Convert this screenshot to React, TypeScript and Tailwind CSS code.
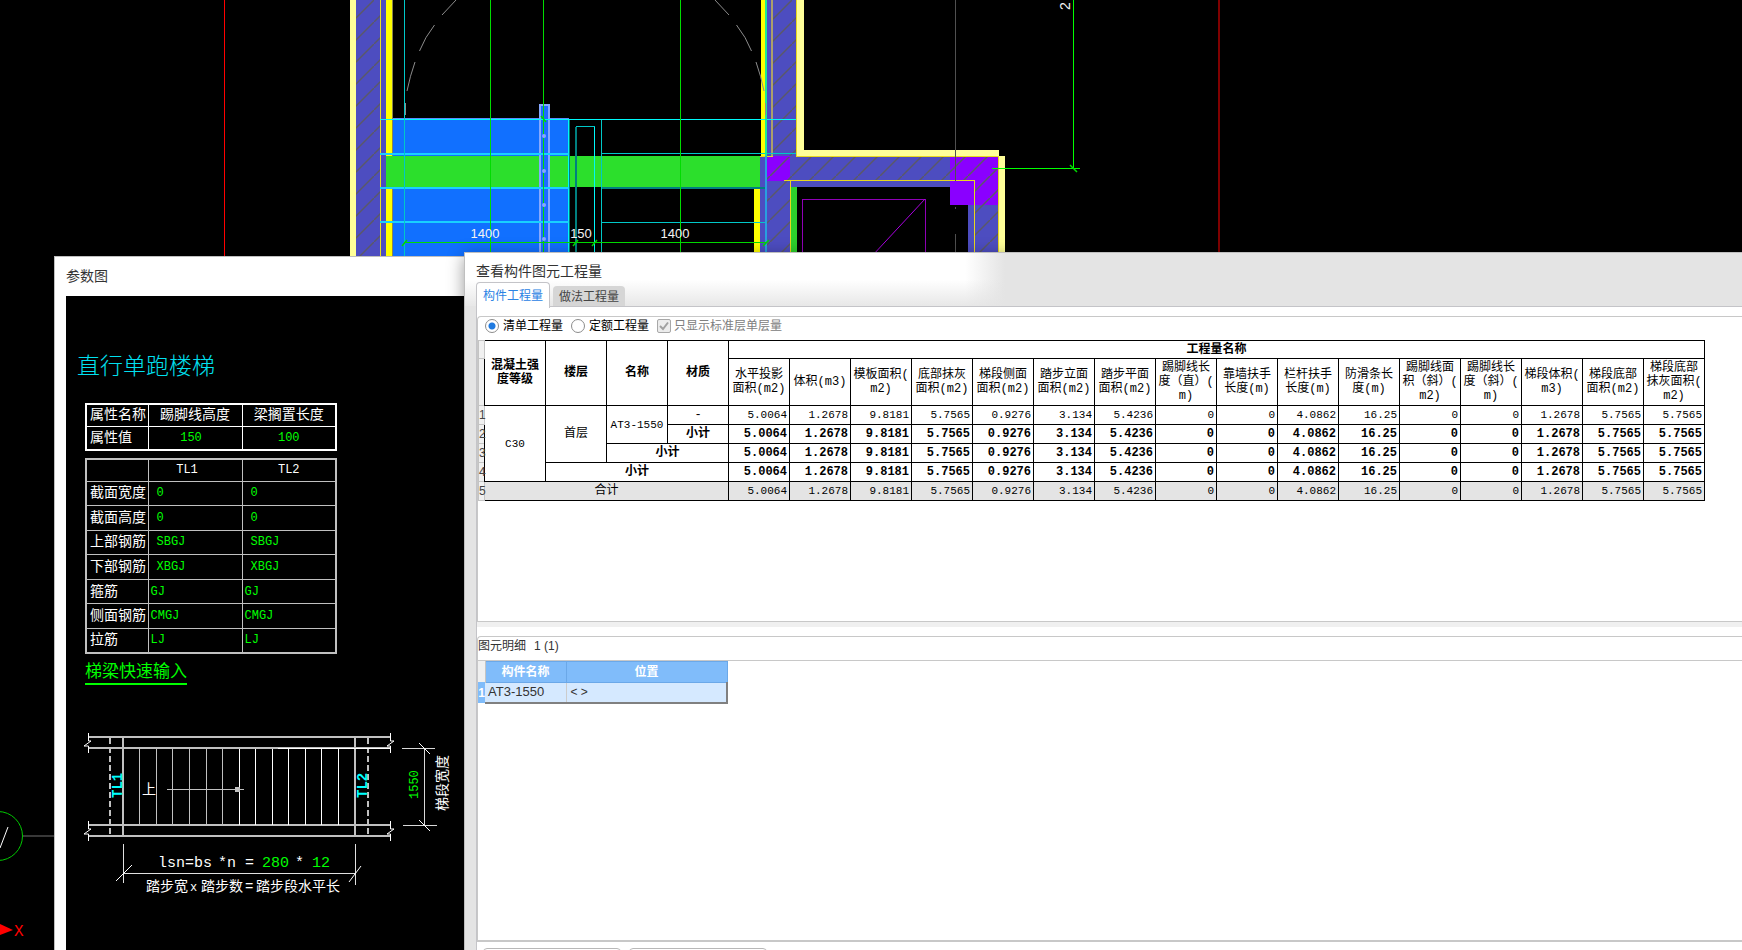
import React from "react";

const uiFont = "font-['Liberation_Sans','Noto_Sans_CJK_SC',sans-serif]";
const cadFont = "font-['Liberation_Mono','Noto_Sans_CJK_SC',monospace]";

function CadBackground() {
  const wall = "#4d4dc0";
  const pale = "#ffff99";
  return (
    <svg className="absolute left-0 top-0" width="1742" height="950" viewBox="0 0 1742 950" aria-hidden="true">
      <defs>
        <pattern id="hatch" width="22" height="22" patternUnits="userSpaceOnUse">
          <path d="M-1 23L23 -1" stroke="#5a5868" strokeWidth="1.5" shapeRendering="auto" />
        </pattern>
      </defs>
      <g shapeRendering="crispEdges">
        <rect x="224" y="0" width="1" height="260" fill="#f00" />
        <rect x="1218" y="0" width="2" height="260" fill="#800000" />
        <rect x="350" y="0" width="6" height="260" fill={pale} />
        <rect x="356" y="0" width="30" height="260" fill={wall} />
        <rect x="356" y="0" width="24" height="260" fill="url(#hatch)" />
        <rect x="380" y="0" width="1" height="260" fill="#e8e020" />
        <rect x="386" y="0" width="6" height="260" fill="#ff0" />
        <rect x="392" y="0" width="1" height="260" fill="#8a8450" />

        <rect x="393" y="119" width="176" height="140" fill="#1170ff" />
        <rect x="393" y="118" width="176" height="1" fill="#5a8cff" />
        <rect x="386" y="156" width="374" height="31" fill="#2cdf2c" />

        <rect x="761" y="0" width="5" height="156" fill="#ff0" />
        <rect x="767" y="0" width="29" height="157" fill={wall} />
        <rect x="773" y="0" width="23" height="157" fill="url(#hatch)" />
        <rect x="771" y="0" width="2" height="156" fill="#aca06c" />
        <rect x="797" y="0" width="7" height="156" fill={pale} />
        <rect x="797" y="150" width="202" height="6" fill={pale} />
        <rect x="760" y="156" width="31" height="100" fill={wall} />
        <rect x="790" y="157" width="160" height="30" fill={wall} />
        <rect x="968" y="205" width="31" height="50" fill={wall} />
        <rect x="767" y="156" width="23" height="25" fill="#8a00ff" />
        <rect x="950" y="157" width="49" height="48" fill="#8a00ff" />
        <rect x="767" y="157" width="232" height="24" fill="url(#hatch)" />
        <rect x="767" y="181" width="23" height="75" fill="url(#hatch)" />
        <rect x="975" y="181" width="24" height="75" fill="url(#hatch)" />
        <rect x="999" y="156" width="6" height="100" fill={pale} />
        <rect x="754" y="187" width="6" height="70" fill="#ff0" />
        <rect x="791" y="187" width="6" height="70" fill="#2cd02c" />
        <g fill="#e8d820">
          <rect x="796" y="0" width="1" height="157" />
          <rect x="796" y="156" width="203" height="1" />
          <rect x="760" y="156" width="13" height="1" />
          <rect x="784" y="180" width="191" height="1" />
          <rect x="790" y="181" width="1" height="75" />
          <rect x="974" y="181" width="1" height="75" />
          <rect x="998" y="157" width="1" height="99" />
        </g>
        <rect x="955" y="0" width="1" height="181" fill="#505050" />
        <rect x="955" y="207" width="1" height="2" fill="#505050" />
        <rect x="955" y="234" width="1" height="20" fill="#505050" />

        <rect x="539" y="104" width="11" height="150" fill="#1c6cff" />
        <path d="M540 256V105H549V256" fill="none" stroke="#86a8ff" strokeWidth="2" />

        <g fill="#00f8f8">
          <rect x="380" y="119" width="416" height="1" />
          <rect x="594" y="127" width="1" height="130" />
          <rect x="568" y="119" width="1" height="137" />
        </g>
        <g fill="#18d0ff">
          <rect x="380" y="153" width="189" height="2" />
          <rect x="380" y="187" width="189" height="2" />
          <rect x="380" y="221" width="189" height="2" />
        </g>
        <g fill="#00c8c8">
          <rect x="404" y="0" width="1" height="257" />
          <rect x="602" y="153" width="194" height="1" />
          <rect x="602" y="222" width="164" height="1" />
          <rect x="601" y="120" width="1" height="136" />
          <rect x="576" y="126" width="19" height="1" />
        </g>
        <g fill="#008080">
          <rect x="602" y="187" width="164" height="2" />
          <rect x="575" y="127" width="2" height="130" />
          <rect x="569" y="120" width="1" height="136" />
        </g>
        <rect x="765" y="0" width="2" height="156" fill="#20e890" />
        <rect x="765" y="156" width="2" height="100" fill="#28a0e0" />

        <g fill="#00dc00">
          <rect x="490" y="0" width="1" height="257" />
          <rect x="543" y="0" width="1" height="257" />
          <rect x="680" y="0" width="1" height="257" />
          <rect x="404" y="242" width="362" height="1" />
        </g>
        <g fill="#0f0">
          <rect x="1073" y="0" width="1" height="169" />
          <rect x="992" y="168" width="88" height="1" />
        </g>
        <path d="M802.500 256V199H925.500V256" fill="none" stroke="#9000b8" />
      </g>
      <path d="M925 199L872 256" stroke="#a800e0" fill="none" />
      <path
        d="M402 246l5-6M573 246l5-6M592 246l5-6M763 246l6-6M541 116l5 6M1070 165l7 7"
        stroke="#00d800"
        strokeWidth="1.500"
        fill="none"
      />
      <g fill="#86a8ff">
        <circle cx="544" cy="136" r="2" />
        <circle cx="544" cy="171" r="2" />
        <circle cx="544" cy="205" r="2" />
        <circle cx="544" cy="239" r="2" />
      </g>
      <g stroke="#8c8c8c" fill="none">
        <path d="M405.500 115V103M407 91Q410 76 415 62M419.500 51Q425 37 434.500 25M442 15L456 0" />
        <path d="M765.500 115V103M764 91Q761 76 756 62M751.500 51Q746 37 736.500 25M729 15L715 0" />
      </g>
      <g fill="#f4f4f4" fontSize="13" textAnchor="middle" fontFamily="'Liberation Sans Narrow','Liberation Sans',sans-serif">
        <text x="485" y="238">1400</text>
        <text x="581" y="238">150</text>
        <text x="675" y="238">1400</text>
        <text transform="translate(1070 10) rotate(-90)" textAnchor="start" fontSize="14">2</text>
      </g>
      <circle cx="-2" cy="836" r="24.500" fill="none" stroke="#00c800" />
      <path d="M8 827L0 848" stroke="#fff" />
      <path d="M23 836H54" stroke="#383838" strokeWidth="2" />
      <path d="M0 924L13 930L0 935Z" fill="#f00" />
      <text x="14" y="936" fill="#f00" fontSize="16" fontFamily="'Liberation Mono',monospace">X</text>
    </svg>
  );
}

const beamRows = [
  ["截面宽度", "0", "0", "pl-2"],
  ["截面高度", "0", "0", "pl-2"],
  ["上部钢筋", "SBGJ", "SBGJ", "pl-2"],
  ["下部钢筋", "XBGJ", "XBGJ", "pl-2"],
  ["箍筋", "GJ", "GJ", "pl-0.5"],
  ["侧面钢筋", "CMGJ", "CMGJ", "pl-0.5"],
  ["拉筋", "LJ", "LJ", "pl-0.5"],
];

function StairPlan() {
  const treads = [139, 156, 172, 189, 206, 222, 239, 255, 272, 288, 305, 321, 338];
  return (
    <svg className="mt-[34px] block" width="398" height="190" viewBox="66 720 398 190" fill="none">
      <g stroke="#c0c0c0" strokeWidth="2" shapeRendering="crispEdges">
        <path d="M88 738H391M88 749H391M88 826H391M88 837H391" />
        <path d="M123 738V837M355 738V837" />
        <path d="M110 739V837M368 739V837" strokeDasharray="6 3" />
      </g>
      <g shapeRendering="crispEdges">
        {treads.map((x, i) => (
          <path key={x} d={`M${x + 0.5} 750V826`} stroke={i < 6 ? "#c0c0c0" : "#fff"} />
        ))}
        <path d="M278 749.500H390" stroke="#fff" />
        <path d="M402 749.500H435M403 826.500H437M424.500 749V826" stroke="#d8d8d8" />
        <path d="M167 790.500H244" stroke="#c0c0c0" />
        <path d="M123.500 845V884M355.500 845V886M123 874.500H356" stroke="#e0e0e0" />
        <rect x="235" y="788" width="5" height="5" fill="#c0c0c0" />
      </g>
      <g stroke="#fff">
        <path d="M88.500 734V742L91 742L84 747H88.500V754M88.500 822V830L91 830L84 835H88.500V842" />
        <path d="M390.500 734V742L394 742L387 747H390.500V754M390.500 822V830L394 830L387 835H390.500V842" />
        <path d="M419 744L430 755M419 821L430 832M116 882L132 866M349 883L361 867" />
      </g>
      <g fontFamily="'Liberation Mono','Noto Sans CJK SC',monospace" fontSize="14">
        <g fill="#0ff" fontWeight="700">
          <text transform="translate(122 799) rotate(-90)">TL1</text>
          <text transform="translate(367 799) rotate(-90)">TL2</text>
        </g>
        <text x="142" y="795" fill="#fff">上</text>
        <text transform="translate(418 800) rotate(-90)" fill="#0f0" fontSize="12">1550</text>
        <text transform="translate(447 812) rotate(-90)" fill="#fff">梯段宽度</text>
        <g fill="#fff" fontSize="15">
          <text x="158" y="868">lsn=bs</text>
          <text x="218" y="868">*n</text>
          <text x="245" y="868">=</text>
          <text x="262" y="868" fill="#0f0">280</text>
          <text x="295" y="868">*</text>
          <text x="312" y="868" fill="#0f0">12</text>
        </g>
        <g fill="#fff">
          <text x="146" y="892">踏步宽</text>
          <text x="190" y="892" fontSize="12">x</text>
          <text x="201" y="892">踏步数</text>
          <text x="245" y="892">=</text>
          <text x="256" y="892">踏步段水平长</text>
        </g>
      </g>
    </svg>
  );
}

function ParameterWindow() {
  return (
    <section className={`absolute bottom-0 left-[54px] top-[256px] flex w-[420px] flex-col border-l border-t border-[#bfbfbf] bg-white pl-[11px] ${uiFont}`}>
      <h2 className="flex h-[39px] shrink-0 items-center text-[14px] text-[#333]">参数图</h2>
      <div className={`flex-1 overflow-hidden bg-black text-[14px] leading-[20px] text-white ${cadFont}`}>
        <h3 className="mt-[56px] pl-[11px] text-[23px] leading-[32px] font-light text-[#00e0f0]">直行单跑楼梯</h3>
        <div className="pl-[19px]">
          <table className="mt-[19px] w-[252px] table-fixed border-collapse border-2 border-white">
            <colgroup>
              <col className="w-[62px]" />
              <col />
              <col />
            </colgroup>
            <tbody>
              <tr className="h-[22px]">
                <th className="border border-white p-0 pl-[3px] text-left font-normal whitespace-nowrap">属性名称</th>
                <th className="border border-white p-0 font-normal">踢脚线高度</th>
                <th className="border border-white p-0 font-normal">梁搁置长度</th>
              </tr>
              <tr className="h-[24px]">
                <th className="border border-white p-0 pl-[3px] text-left font-normal">属性值</th>
                <td className="border border-white p-0 pr-2 text-center text-[12px] text-[#0f0]">150</td>
                <td className="border border-white p-0 text-center text-[12px] text-[#0f0]">100</td>
              </tr>
            </tbody>
          </table>
          <table className="mt-[7px] h-[196px] w-[252px] table-fixed border-collapse border-2 border-[#c0c0c0]">
            <colgroup>
              <col className="w-[62px]" />
              <col />
              <col />
            </colgroup>
            <thead>
              <tr className="h-[22px] text-[12px]">
                <td className="border border-[#c0c0c0] p-0" />
                <th className="border border-[#c0c0c0] p-0 pr-4 font-normal">TL1</th>
                <th className="border border-[#c0c0c0] p-0 font-normal">TL2</th>
              </tr>
            </thead>
            <tbody>
              {beamRows.map(([name, a, b, pad]) => (
                <tr key={name} className="h-[24px]">
                  <th className="border border-[#c0c0c0] p-0 pl-[3px] text-left font-normal whitespace-nowrap">{name}</th>
                  <td className={`border border-[#c0c0c0] text-[12px] text-[#0f0] ${pad}`}>{a}</td>
                  <td className={`border border-[#c0c0c0] text-[12px] text-[#0f0] ${pad}`}>{b}</td>
                </tr>
              ))}
            </tbody>
          </table>
          <a href="#quick-input" className="mt-[9px] inline-block border-b-2 border-[#0f0] text-[17px] leading-[20px] text-[#0f0]">
            梯梁快速输入
          </a>
        </div>
        <StairPlan />
      </div>
    </section>
  );
}

const columns = [
  ["水平投影", "面积(m2)"],
  ["体积(m3)"],
  ["模板面积(", "m2)"],
  ["底部抹灰", "面积(m2)"],
  ["梯段侧面", "面积(m2)"],
  ["踏步立面", "面积(m2)"],
  ["踏步平面", "面积(m2)"],
  ["踢脚线长", "度（直）(", "m)"],
  ["靠墙扶手", "长度(m)"],
  ["栏杆扶手", "长度(m)"],
  ["防滑条长", "度(m)"],
  ["踢脚线面", "积（斜）(", "m2)"],
  ["踢脚线长", "度（斜）(", "m)"],
  ["梯段体积(", "m3)"],
  ["梯段底部", "面积(m2)"],
  ["梯段底部", "抹灰面积(", "m2)"],
];

const values = [
  "5.0064", "1.2678", "9.8181", "5.7565", "0.9276", "3.134", "5.4236", "0",
  "0", "4.0862", "16.25", "0", "0", "1.2678", "5.7565", "5.7565",
];

const cell = "border border-black p-0 overflow-hidden whitespace-nowrap";

function RowHead({ children }: { children?: React.ReactNode }) {
  return (
    <th className={`border border-[#c4c4c4] bg-[#f0f0f0] p-0 text-left text-[12px] font-normal text-[#444] ${uiFont}`}>
      {children}
    </th>
  );
}

function Values({ bold = false }: { bold?: boolean }) {
  return (
    <>
      {values.map((v, i) => (
        <td key={i} className={`${cell} pr-0.5 text-right ${bold ? "text-[12px] font-bold" : "text-[11px]"}`}>
          {v}
        </td>
      ))}
    </>
  );
}

function QuantityTable() {
  return (
    <table className={`w-[1226px] table-fixed border-collapse bg-white text-[12px] leading-[14px] text-black ${cadFont}`}>
      <colgroup>
        <col className="w-[6px]" />
        {Array.from({ length: 20 }, (_, i) => (
          <col key={i} className="w-[61px]" />
        ))}
      </colgroup>
      <thead>
        <tr className="h-[18px]">
          <RowHead />
          <th className={cell} rowSpan={2}>混凝土强<br />度等级</th>
          <th className={cell} rowSpan={2}>楼层</th>
          <th className={cell} rowSpan={2}>名称</th>
          <th className={cell} rowSpan={2}>材质</th>
          <th className={cell} colSpan={16}>工程量名称</th>
        </tr>
        <tr className="h-[47px]">
          <RowHead />
          {columns.map((lines, i) => (
            <th key={i} className={`${cell} font-normal`}>
              {lines.map((l) => (
                <span key={l} className="-mx-1 block">{l}</span>
              ))}
            </th>
          ))}
        </tr>
      </thead>
      <tbody className="text-center">
        <tr className="h-[19px]">
          <RowHead>1</RowHead>
          <td className={`${cell} text-[11px]`} rowSpan={4}>C30</td>
          <td className={cell} rowSpan={3}>首层</td>
          <td className={`${cell} text-[11px]`} rowSpan={2}>AT3-1550</td>
          <td className={cell}>-</td>
          <Values />
        </tr>
        <tr className="h-[19px]">
          <RowHead>2</RowHead>
          <td className={`${cell} font-bold`}>小计</td>
          <Values bold />
        </tr>
        <tr className="h-[19px]">
          <RowHead>3</RowHead>
          <td className={`${cell} font-bold`} colSpan={2}>小计</td>
          <Values bold />
        </tr>
        <tr className="h-[19px]">
          <RowHead>4</RowHead>
          <td className={`${cell} font-bold`} colSpan={3}>小计</td>
          <Values bold />
        </tr>
        <tr className="h-[19px] bg-[#e4e4e4]">
          <RowHead>5</RowHead>
          <td className={cell} colSpan={4}>合计</td>
          <Values />
        </tr>
      </tbody>
    </table>
  );
}

const radio =
  "mr-1 size-[14px] appearance-none rounded-full border border-[#8c8c8c] bg-white checked:bg-[radial-gradient(circle,#1f7ae0_3px,#fff_4px)]";

function QuantityWindow() {
  return (
    <section className={`absolute bottom-0 left-[464px] right-0 top-[252px] flex flex-col overflow-hidden border-l border-t border-[#bfbfbf] bg-[#e4e4e4] shadow-[0_4px_16px_rgba(0,0,0,0.4)] ${uiFont}`}>
      <header className="flex h-[53px] shrink-0 flex-col bg-[linear-gradient(to_bottom,transparent_50%,#e4e4e4e0),linear-gradient(to_right,#fff_500px,#e4e4e4_540px)] pl-[11px]">
        <h2 className="pt-2 text-[14px] leading-[20px] text-[#333]">查看构件图元工程量</h2>
        <div role="tablist" className="flex flex-1 items-end text-[12px]">
          <button role="tab" aria-selected="true" className="relative top-px h-[26px] w-[74px] rounded-t border border-b-0 border-[#c4c4c8] bg-white text-[#2a82e4]">
            构件工程量
          </button>
          <button role="tab" aria-selected="false" className="ml-[3px] h-[21px] w-[72px] rounded-t bg-[#d6d6d6] text-[#444]">
            做法工程量
          </button>
        </div>
      </header>
      <div className="ml-[11px] flex min-h-0 flex-1 flex-col border-l border-t border-[#c4c4c8] bg-white pt-[9px]">
        <div className="min-h-0 flex-1 overflow-hidden rounded-tl border-y border-l border-[#c8c8c8]">
          <form className="mb-[6px] flex h-[17px] items-center pl-[7px] text-[12px] text-black">
            <label className="flex items-center">
              <input type="radio" name="mode" defaultChecked className={radio} />
              清单工程量
            </label>
            <label className="ml-2 flex items-center">
              <input type="radio" name="mode" className={radio} />
              定额工程量
            </label>
            <label className="ml-2 flex items-center text-[#808080]">
              <span className="relative mr-[3px] flex">
                <input type="checkbox" checked disabled readOnly className="size-[14px] appearance-none rounded-xs border border-[#a8a8a8] bg-[#ececec]" />
                <svg className="absolute inset-0" width="14" height="14" viewBox="0 0 14 14" fill="none">
                  <path d="M3 7L6 10L11 3.500" stroke="#a0a0a0" strokeWidth="2" />
                </svg>
              </span>
              只显示标准层单层量
            </label>
          </form>
          <QuantityTable />
        </div>
        <div className="h-[5px] shrink-0 bg-[#f0f0f0]" />
        <div className="mt-[9px] flex min-h-0 flex-1 flex-col rounded-tl border-b-2 border-l border-t border-[#c8c8c8]">
          <h3 className="flex h-[23px] shrink-0 gap-2 text-[12px] leading-[18px] text-[#333]">
            <span>图元明细</span>
            <span>1 (1)</span>
          </h3>
          <div className="flex-1 border-t border-[#c8c8c8]">
            <table className="w-[250px] table-fixed border-collapse text-[12px] leading-[16px]">
              <colgroup>
                <col className="w-[7px]" />
                <col className="w-[81px]" />
                <col />
              </colgroup>
              <thead>
                <tr className="h-[21px] bg-[#80bcfa] text-white">
                  <td className="border-r border-[#c4c4c4] bg-[#f0f0f0] p-0" />
                  <th className="border border-[#6ba8e8] p-0">构件名称</th>
                  <th className="border border-[#6ba8e8] p-0">位置</th>
                </tr>
              </thead>
              <tbody>
                <tr className="h-[21px] bg-[#d5e9ff] text-[#333]">
                  <th className="bg-[#80bcfa] p-0 text-white">1</th>
                  <td className="border-b-2 border-r border-b-[#808080] border-r-[#ccc] p-0 pl-[3px] text-[13px]">AT3-1550</td>
                  <td className="border-b-2 border-r-2 border-[#808080] p-0 pl-1">&lt;&nbsp;&gt;</td>
                </tr>
              </tbody>
            </table>
          </div>
        </div>
        <div className="mt-[6px] flex h-[2px] shrink-0 gap-2 pl-[6px]">
          <button aria-label="查询" className="h-6 w-[138px] shrink-0 rounded border border-[#b8b8b8] bg-white" />
          <button aria-label="导出" className="h-6 w-[138px] shrink-0 rounded border border-[#b8b8b8] bg-white" />
        </div>
      </div>
    </section>
  );
}

export default function App() {
  return (
    <main className="relative h-screen overflow-hidden bg-black">
      <CadBackground />
      <ParameterWindow />
      <QuantityWindow />
    </main>
  );
}
